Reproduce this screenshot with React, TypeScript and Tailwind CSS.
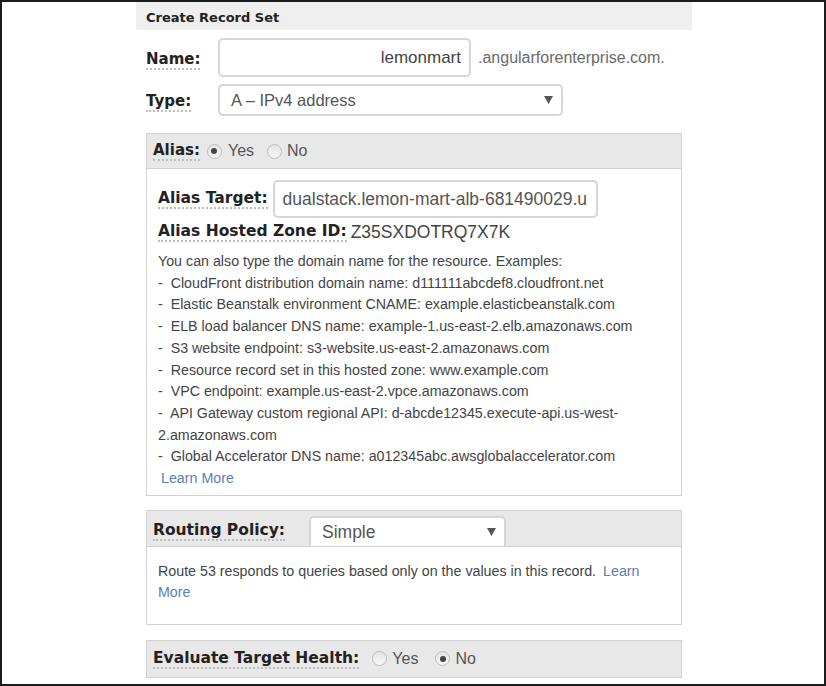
import React from 'react';

const label = "font-['DejaVu_Sans',Verdana,sans-serif] font-bold text-[#222] border-b-2 border-dotted border-[#bdbdbd] leading-[18px]";
const body = "font-['Liberation_Sans',Arial,sans-serif]";

const Radio: React.FC<{ checked?: boolean }> = ({ checked }) => (
  <span className="inline-flex w-[15px] h-[15px] rounded-full border border-[#bdbdbd] bg-gradient-to-b from-[#e4e4e4] to-[#f7f7f7] items-center justify-center">
    {checked && <span className="w-[6px] h-[6px] rounded-full bg-[#444]" />}
  </span>
);

const Arrow = () => (
  <svg width="9" height="8" viewBox="0 0 9 8" className="shrink-0">
    <path d="M0 0 H9 L4.5 8 Z" fill="#555" />
  </svg>
);

const examples = [
  '-  CloudFront distribution domain name: d111111abcdef8.cloudfront.net',
  '-  Elastic Beanstalk environment CNAME: example.elasticbeanstalk.com',
  '-  ELB load balancer DNS name: example-1.us-east-2.elb.amazonaws.com',
  '-  S3 website endpoint: s3-website.us-east-2.amazonaws.com',
  '-  Resource record set in this hosted zone: www.example.com',
  '-  VPC endpoint: example.us-east-2.vpce.amazonaws.com',
  '-  API Gateway custom regional API: d-abcde12345.execute-api.us-west-',
  '2.amazonaws.com',
  '-  Global Accelerator DNS name: a012345abc.awsglobalaccelerator.com',
];

export default function App() {
  return (
    <div className="w-[826px] h-[686px] border-2 border-[#1c1c1c] bg-white overflow-hidden pl-[134px]">
      <div className="w-[556px]">
        <div className="h-[28px] bg-[#efefef] pl-[10px] flex items-center pt-[3px]">
          <span className="font-['DejaVu_Sans',Verdana,sans-serif] font-bold text-[13px] text-[#222]">Create Record Set</span>
        </div>

        <div className="px-[10px]">
          {/* Name */}
          <div className="flex items-center mt-[8px]">
            <div className="w-[72px]"><span className={`${label} text-[15px]`}>Name:</span></div>
            <div className={`${body} w-[253px] h-[39px] border-2 border-[#d6d6d6] rounded-[5px] flex items-center justify-end pr-[8px] text-[17px] text-[#444]`}>lemonmart</div>
            <span className={`${body} ml-[7px] text-[16px] text-[#6a6a6a]`}>.angularforenterprise.com.</span>
          </div>

          {/* Type */}
          <div className="flex items-center mt-[7px]">
            <div className="w-[72px]"><span className={`${label} text-[15px]`}>Type:</span></div>
            <div className={`${body} w-[345px] h-[32px] border-2 border-[#d6d6d6] rounded-[5px] flex items-center justify-between pl-[11px] pr-[8px] text-[16.5px] text-[#555]`}>
              <span>A – IPv4 address</span>
              <Arrow />
            </div>
          </div>

          {/* Alias */}
          <div className="mt-[17px] border border-[#d2d2d2]">
            <div className="h-[35px] bg-[#e8e8e8] flex items-center pl-[6px] border-b border-[#d2d2d2]">
              <span className={`${label} text-[15px]`}>Alias:</span>
              <span className="ml-[7px] flex"><Radio checked /></span>
              <span className={`${body} ml-[6px] text-[16px] text-[#555]`}>Yes</span>
              <span className="ml-[13px] flex"><Radio /></span>
              <span className={`${body} ml-[5px] text-[16px] text-[#555]`}>No</span>
            </div>
            <div className="bg-white pl-[11px] pt-[11px] pb-[5px]">
              <div className="flex items-center">
                <span className={`${label} text-[15.5px]`}>Alias Target:</span>
                <div className={`${body} ml-[5px] w-[325px] h-[38px] border-2 border-[#d6d6d6] rounded-[5px] flex items-center pl-[8px] text-[17.5px] text-[#555] overflow-hidden whitespace-nowrap`}>
                  dualstack.lemon-mart-alb-681490029.u
                </div>
              </div>
              <div className="flex items-center h-[24px] mt-[2px]">
                <span className={`${label} text-[15.5px]`}>Alias Hosted Zone ID:</span>
                <span className={`${body} ml-[4px] text-[17.5px] text-[#444]`}>Z35SXDOTRQ7X7K</span>
              </div>
              <div className={`${body} mt-[7px] text-[14.25px] leading-[21.7px] text-[#444]`}>
                <div>You can also type the domain name for the resource. Examples:</div>
                {examples.map((e) => (
                  <div key={e} className="whitespace-pre">{e}</div>
                ))}
                <div className="pl-[3px] text-[#5b80b2]">Learn More</div>
              </div>
            </div>
          </div>

          {/* Routing Policy */}
          <div className="mt-[14px] border border-[#d2d2d2]">
            <div className="h-[36px] bg-[#e8e8e8] flex items-center pl-[6px] border-b border-[#d2d2d2]">
              <div className="w-[156px] mt-[2px]"><span className={`${label} text-[15.5px]`}>Routing Policy:</span></div>
              <div className={`${body} self-end w-[197px] h-[30px] bg-white border-2 border-b-0 border-[#d6d6d6] rounded-t-[5px] flex items-center justify-between pl-[11px] pr-[8px] text-[17.5px] text-[#555]`}>
                <span>Simple</span>
                <Arrow />
              </div>
            </div>
            <div className={`${body} bg-white h-[77px] pl-[11px] pt-[14px] text-[14.25px] leading-[21.7px] text-[#444]`}>
              <div>
                Route 53 responds to queries based only on the values in this record.
                <span className="ml-[7px] text-[#5b80b2]">Learn</span>
              </div>
              <div className="text-[#5b80b2]">More</div>
            </div>
          </div>

          {/* Evaluate Target Health */}
          <div className="mt-[15px] border border-[#d2d2d2] h-[38px] bg-[#e8e8e8] flex items-center pl-[6px]">
            <span className={`${label} text-[15.5px]`}>Evaluate Target Health:</span>
            <span className="ml-[13px] flex"><Radio /></span>
            <span className={`${body} ml-[5px] text-[16px] text-[#555]`}>Yes</span>
            <span className="ml-[17px] flex"><Radio checked /></span>
            <span className={`${body} ml-[5px] text-[16px] text-[#555]`}>No</span>
          </div>
        </div>
      </div>
    </div>
  );
}
